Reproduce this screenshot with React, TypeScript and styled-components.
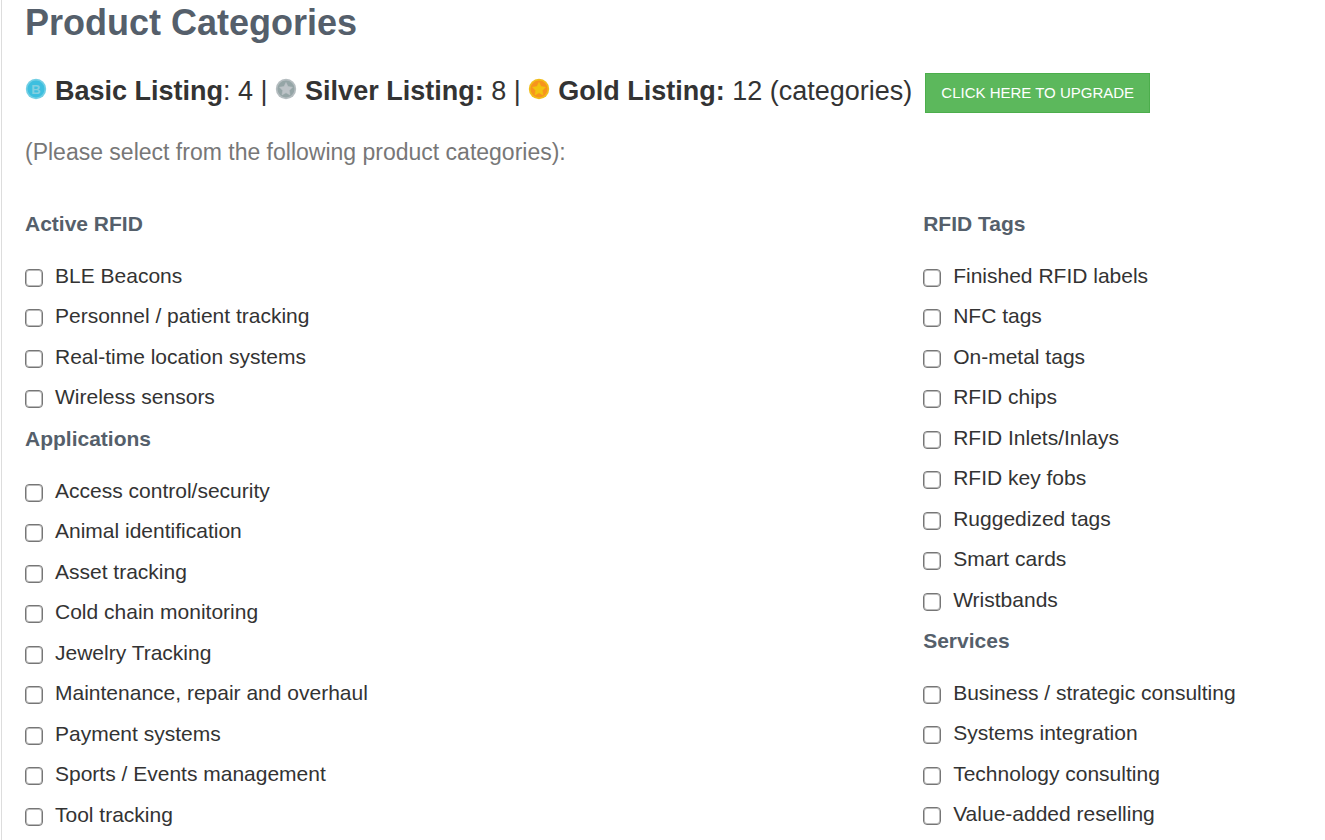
import React from "react";
import styled, { createGlobalStyle } from "styled-components";

const GlobalStyle = createGlobalStyle`
  * { box-sizing: border-box; }
  body {
    margin: 0;
    background: #fff;
    color: #333;
    font-family: Arial, "Liberation Sans", sans-serif;
  }
`;

const Page = styled.main`
  min-height: 100vh;
  margin-left: 1px;
  padding-left: 23px;
  border-left: 1px solid #ddd;
`;

const Title = styled.h1`
  margin: 0;
  color: #555f6b;
  font-size: 36px;
  line-height: 46px;
`;

const Levels = styled.div`
  display: flex;
  align-items: center;
  margin-top: 24px;
  height: 42px;
  font-size: 27px;
  line-height: 36px;
  white-space: nowrap;
`;

const Level = styled.span`
  display: inline-flex;
  align-items: center;
  white-space: pre;

  svg {
    flex: none;
    width: 22px;
    height: 22px;
    margin: 0 8px 4px 0;
  }
`;

const UpgradeButton = styled.button`
  height: 40px;
  margin: 4px 0 0 13px;
  padding: 0 15px 2px;
  border: 1px solid #4cae4c;
  background: #5cb85c;
  color: #fff;
  font: 15px Arial, "Liberation Sans", sans-serif;
  text-transform: uppercase;
  cursor: pointer;
`;

const Hint = styled.p`
  margin: 22px 0 0;
  color: #777;
  font-size: 23px;
  line-height: 36px;
`;

const Columns = styled.div`
  display: grid;
  grid-template-columns: 38fr 17fr;
  margin-top: 39px;
`;

const Group = styled.fieldset`
  margin: 0;
  padding: 0;
  border: 0;
  min-width: 0;
`;

const GroupTitle = styled.legend`
  padding: 0;
  color: #555f6b;
  font-size: 21px;
  font-weight: bold;
  line-height: 30px;
  margin-bottom: 17px;
`;

const Options = styled.ul`
  margin: 0 0 6px;
  padding: 0;
  list-style: none;
`;

const Option = styled.li`
  height: 40px;

  &:nth-child(even) {
    height: 41px;
  }
`;

const OptionLabel = styled.label`
  display: inline-flex;
  align-items: center;
  gap: 12px;
  height: 40px;
  font-size: 21px;
  line-height: 30px;
`;

const Checkbox = styled.input`
  appearance: none;
  flex: none;
  width: 18px;
  height: 18px;
  margin: 3px 0 0;
  border: 1px solid #767676;
  border-radius: 4px;
  background: #fff;
  box-shadow: inset 0 0 0 1px #bbb;

  &:checked {
    border-color: #0075ff;
    background: #0075ff;
    box-shadow: inset 0 0 0 3px #fff;
  }
`;

const STAR = "M11 4.4l2 4.1 4.5.7-3.2 3.2.7 4.5-4-2.1-4 2.1.7-4.5-3.2-3.2 4.5-.7z";

function Medal({ rim, face, mark, letter }: { rim: string; face: string; mark: string; letter?: boolean }) {
  return (
    <svg viewBox="0 0 22 22" aria-hidden="true">
      <circle cx="11" cy="11" r="10.2" fill={rim} />
      <circle cx="11" cy="11" r="8.5" fill={face} />
      {letter ? (
        <text x="11" y="15.7" fill={mark} fontSize="13" fontWeight="bold" textAnchor="middle">
          B
        </text>
      ) : (
        <path d={STAR} fill={mark} stroke={mark} strokeWidth="0.5" strokeLinejoin="round" />
      )}
    </svg>
  );
}

type GroupData = { title: string; options: string[] };

const COLUMNS: GroupData[][] = [
  [
    {
      title: "Active RFID",
      options: ["BLE Beacons", "Personnel / patient tracking", "Real-time location systems", "Wireless sensors"],
    },
    {
      title: "Applications",
      options: [
        "Access control/security",
        "Animal identification",
        "Asset tracking",
        "Cold chain monitoring",
        "Jewelry Tracking",
        "Maintenance, repair and overhaul",
        "Payment systems",
        "Sports / Events management",
        "Tool tracking",
      ],
    },
  ],
  [
    {
      title: "RFID Tags",
      options: [
        "Finished RFID labels",
        "NFC tags",
        "On-metal tags",
        "RFID chips",
        "RFID Inlets/Inlays",
        "RFID key fobs",
        "Ruggedized tags",
        "Smart cards",
        "Wristbands",
      ],
    },
    {
      title: "Services",
      options: [
        "Business / strategic consulting",
        "Systems integration",
        "Technology consulting",
        "Value-added reselling",
      ],
    },
  ],
];

function CategoryGroup({ title, options }: GroupData) {
  return (
    <Group>
      <GroupTitle>{title}</GroupTitle>
      <Options>
        {options.map((name) => (
          <Option key={name}>
            <OptionLabel>
              <Checkbox type="checkbox" name="category" value={name} />
              {name}
            </OptionLabel>
          </Option>
        ))}
      </Options>
    </Group>
  );
}

export default function App() {
  return (
    <>
      <GlobalStyle />
      <Page>
        <Title>Product Categories</Title>
        <Levels>
          <Level>
            <Medal rim="#72cfe4" face="#3dbfdf" mark="#83cfe0" letter />
            <b>Basic Listing</b>: 4 |{" "}
          </Level>
          <Level>
            <Medal rim="#b5bdc0" face="#95a5a6" mark="#bdc3c7" />
            <b>Silver Listing:</b> 8 |{" "}
          </Level>
          <Level>
            <Medal rim="#f1bd19" face="#f7941d" mark="#f1c40f" />
            <b>Gold Listing:</b> 12 (categories)
          </Level>
          <UpgradeButton type="button">Click here to upgrade</UpgradeButton>
        </Levels>
        <Hint>(Please select from the following product categories):</Hint>
        <Columns>
          {COLUMNS.map((groups) => (
            <div key={groups[0].title}>
              {groups.map((group) => (
                <CategoryGroup key={group.title} {...group} />
              ))}
            </div>
          ))}
        </Columns>
      </Page>
    </>
  );
}
